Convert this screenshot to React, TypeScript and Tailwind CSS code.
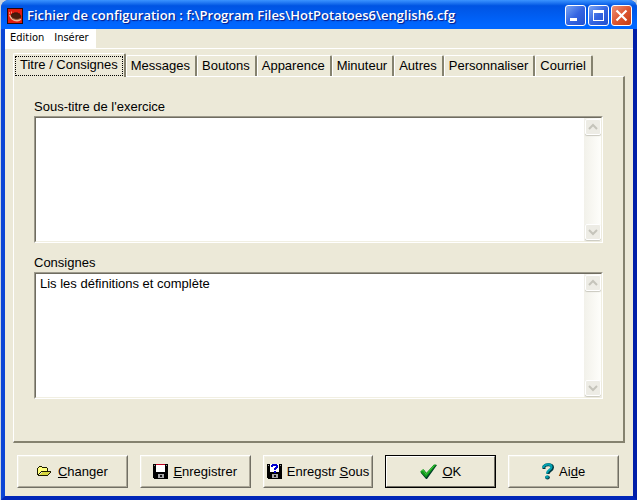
import { useState } from "react";
import type { ReactNode } from "react";
import clsx from "clsx";

const tabs = [
  "Titre / Consignes",
  "Messages",
  "Boutons",
  "Apparence",
  "Minuteur",
  "Autres",
  "Personnaliser",
  "Courriel",
];

function PotatoIcon() {
  return (
    <svg className="h-4 w-4 shrink-0" viewBox="0 0 16 16" aria-hidden="true">
      <rect width="16" height="16" fill="#2a0806" />
      <rect x="1" y="1" width="14" height="14" fill="#e01c10" />
      <path d="M2 6.500c.5 4 4 7 8 7 2.500 0 4-1 4.300-2.500L9 10.500z" fill="#f0b898" />
      <ellipse cx="9" cy="8" rx="5.300" ry="3.200" transform="rotate(8 9 8)" fill="#4a1c0c" />
      <path d="M5 10c2 1.500 6 2 8.500.5" fill="none" stroke="#8d5434" strokeWidth="1" />
      <path d="M6 6.500V5M8 6V4M10 6V4M12 6.500V5" stroke="#3a1408" strokeWidth="1" />
      <path d="M2.500 6V4M4.500 5.500V3.500" stroke="#f58a70" strokeWidth="1" />
    </svg>
  );
}

function FolderIcon() {
  return (
    <svg className="h-[11px] w-4" viewBox="0 0 16 11" shapeRendering="crispEdges" aria-hidden="true">
      <path d="M1 9V2h1V1h3v1h5v3H4L2 9z" fill="#ffff7b" />
      <path d="M5 6h9L11 9H3z" fill="#d8d840" />
      <path d="M0 2h1v7H0zM1 1h1v1H1zM2 0h3v1H2zM5 1h1v1H5zM6 1h4v1H6zM10 2h1v3h-1zM4 5h10v1H4zM3 6h1v1H3zM2 7h1v1H2zM1 8h1v1H1zM1 9h10v1H1zM13 6h1v1h-1zM12 7h1v1h-1zM11 8h1v1h-1z" fill="#1c1c00" />
    </svg>
  );
}

function DiskIcon({ query = false }: { query?: boolean }) {
  return (
    <svg className="h-[15px] w-[15px]" viewBox="0 0 15 15" shapeRendering="crispEdges" aria-hidden="true">
      <path d="M0 0h15v15H1v-1H0z" fill="#000" />
      <path d="M3 0h9v8H3z" fill="#fff" />
      {!query && <path d="M3 0h9v1H3z" fill="#c00020" />}
      <path d="M1 1h1v1H1zM13 1h1v1h-1z" fill="#999" />
      <path d="M5 10h6v4H5z" fill="#a8a8a8" />
      <path d="M7 11h2v2H7z" fill="#111" />
      {query && (
        <path d="M4 1h1V0h5v1h1v3h-1v1H9v1H7V4h1V3h1V2H6v1H4zM7 7h2v2H7z" fill="#0000d0" />
      )}
    </svg>
  );
}

function CheckIcon() {
  return (
    <svg className="h-[15px] w-[17px]" viewBox="0 0 17 15" aria-hidden="true">
      <path d="M.5 8.500L4 6l2.500 3L14 1h3L7 15H6z" fill="#003c28" />
      <path d="M.2 7.500L3.300 5l3 4L14 .5h2.500L6 13.500z" fill="#109a1c" />
      <path d="M1.500 7L3 6l3.200 4.500 8-9" fill="none" stroke="#3fc63e" strokeWidth="1" />
    </svg>
  );
}

function HelpIcon() {
  return (
    <svg className="h-[17px] w-3" viewBox="0 0 12 17" aria-hidden="true">
      <path d="M2 6V3.500C4 1 10.500 1 10.500 4.500c0 3-4.500 3-4.500 6.500" fill="none" stroke="#00343c" strokeWidth="3" />
      <path d="M1.500 5V3.500C3.500.5 9.500.5 9.500 4c0 3-4.500 3-4.500 6.500" fill="none" stroke="#00a0b0" strokeWidth="2.200" />
      <ellipse cx="5.500" cy="14.500" rx="2.300" ry="1.900" fill="#00343c" />
      <ellipse cx="5" cy="14" rx="1.800" ry="1.500" fill="#00a0b0" />
    </svg>
  );
}

function CaptionButton({ label, close, children }: { label: string; close?: boolean; children: ReactNode }) {
  return (
    <button
      type="button"
      aria-label={label}
      className={clsx(
        "h-[21px] w-[21px] rounded-[3px] border border-white bg-linear-to-br",
        close ? "from-[#ec9076] via-[#de5631] to-[#c43c12]" : "from-[#7ba4f2] via-[#3565e2] to-[#2350cf]"
      )}
    >
      <svg className="h-[19px] w-[19px]" viewBox="0 0 19 19" aria-hidden="true">
        {children}
      </svg>
    </button>
  );
}

function ScrollButton({ label, path }: { label: string; path: string }) {
  return (
    <button
      type="button"
      aria-label={label}
      className="h-4 w-4 rounded-[2px] border border-white bg-[#edece5] shadow-[0_1px_1px_#c9c8be]"
    >
      <svg className="h-[14px] w-[14px]" viewBox="0 0 14 14" aria-hidden="true">
        <path d={path} fill="none" stroke="#c5c4bb" strokeWidth="2" />
      </svg>
    </button>
  );
}

function MemoField({ id, label, initial = "" }: { id: string; label: string; initial?: string }) {
  const [value, setValue] = useState(initial);

  return (
    <div className="flex flex-1 flex-col gap-px">
      <label htmlFor={id} className="self-start leading-4">
        {label}
      </label>
      <div className="flex flex-1 border border-t-[#9d9a8c] border-r-white border-b-white border-l-[#9d9a8c]">
        <div className="flex flex-1 border border-t-[#6f6c60] border-r-[#f1efe2] border-b-[#f1efe2] border-l-[#6f6c60] bg-white">
          <textarea
            id={id}
            value={value}
            onChange={(e) => setValue(e.target.value)}
            className="min-w-0 flex-1 resize-none bg-white px-1 py-0.5 leading-4 outline-none"
          />
          <div className="flex w-[17px] flex-col items-center justify-between bg-linear-to-r from-[#f2f1ea] to-[#fefefb] py-px">
            <ScrollButton label={`${label} : haut`} path="M3 9l4-4 4 4" />
            <ScrollButton label={`${label} : bas`} path="M3 5l4 4 4-4" />
          </div>
        </div>
      </div>
    </div>
  );
}

function CommandButton({ icon, isDefault, children }: { icon: ReactNode; isDefault?: boolean; children: ReactNode }) {
  return (
    <button
      type="button"
      className={clsx(
        "flex h-[33px] min-w-0 items-center justify-center whitespace-nowrap border bg-[#ece9d8]",
        isDefault ? "border-black" : "border-t-white border-r-[#716f64] border-b-[#716f64] border-l-white"
      )}
    >
      <span
        className={clsx(
          "flex h-full w-full items-center justify-center gap-[5px] border",
          isDefault
            ? "border-t-white border-r-[#716f64] border-b-[#716f64] border-l-white"
            : "border-t-[#f1efe2] border-r-[#aca899] border-b-[#aca899] border-l-[#f1efe2]"
        )}
      >
        {icon}
        <span>{children}</span>
      </span>
    </button>
  );
}

export default function App() {
  const [active, setActive] = useState(tabs[0]);

  return (
    <div className="flex min-h-screen flex-col bg-[#c9d3df] pl-px font-['Liberation_Sans',Arial,sans-serif] text-[13px] text-black">
      <div className="flex flex-1 flex-col overflow-hidden rounded-t-lg bg-[#0b3fd0]">
        <header className="flex h-[29px] items-center gap-1 bg-linear-to-b from-[#3b94ff] from-0% via-[#0054e3] via-20% to-[#0066ff] to-85% pt-0.5 pr-[5px] pl-1.5">
          <PotatoIcon />
          <h1 className="flex-1 truncate font-['Open_Sans',sans-serif] text-[13px] font-semibold text-white [text-shadow:1px_1px_1px_#0a1883]">
            Fichier de configuration : f:\Program Files\HotPotatoes6\english6.cfg
          </h1>
          <div className="flex gap-0.5">
            <CaptionButton label="Réduire">
              <path d="M4 12h7v3H4z" fill="#fff" />
            </CaptionButton>
            <CaptionButton label="Agrandir">
              <path d="M4 4h11v11H4zM5 7v7h9V7z" fill="#fff" fillRule="evenodd" />
            </CaptionButton>
            <CaptionButton label="Fermer" close>
              <path d="M4.500 4.500l10 10M14.500 4.500l-10 10" stroke="#fff" strokeWidth="2.200" />
            </CaptionButton>
          </div>
        </header>

        <div className="flex flex-1 flex-col border-r-4 border-b-4 border-l-4 border-r-[#001ea8] border-b-[#0026b8] border-l-[#0b45d6] bg-[#ece9d8]">
          <nav className="flex h-5 border-b border-white font-['DejaVu_Sans_Condensed','DejaVu_Sans',sans-serif] text-[11px]">
            <div className="flex bg-white pr-0.5">
              <button type="button" className="px-[5px]">
                Edition
              </button>
              <button type="button" className="px-[5px]">
                Insérer
              </button>
            </div>
          </nav>

          <main className="flex flex-1 flex-col gap-3 px-2 pt-1 pb-2">
            <div className="flex flex-1 flex-col">
              <div role="tablist" className="flex items-end">
                {tabs.map((tab) => (
                  <button
                    key={tab}
                    type="button"
                    role="tab"
                    id={`tab-${tab}`}
                    aria-selected={tab === active}
                    onClick={() => setActive(tab)}
                    className={clsx(
                      "rounded-t-[2px] border-t border-r-2 border-l border-t-white border-r-[#85826f] border-l-white bg-[#ece9d8] whitespace-nowrap",
                      tab === active ? "relative -mb-px h-6 px-px pt-px" : "h-[21px] pr-[5px] pl-1"
                    )}
                  >
                    {tab === active ? (
                      <span className="flex h-5 items-start border border-dotted border-black px-1 leading-4">{tab}</span>
                    ) : (
                      tab
                    )}
                  </button>
                ))}
              </div>
              <section
                role="tabpanel"
                aria-labelledby={`tab-${active}`}
                className="flex flex-1 flex-col gap-3 border-t border-r-2 border-b-2 border-l border-t-white border-r-[#85826f] border-b-[#85826f] border-l-white px-5 pt-[22px] pb-[42px]"
              >
                <MemoField id="subtitle" label="Sous-titre de l'exercice" />
                <MemoField id="instructions" label="Consignes" initial="Lis les définitions et complète" />
              </section>
            </div>

            <div className="grid grid-cols-5 gap-3 pr-1.5 pl-1">
              <CommandButton icon={<FolderIcon />}>
                <u>C</u>hanger
              </CommandButton>
              <CommandButton icon={<DiskIcon />}>
                <u>E</u>nregistrer
              </CommandButton>
              <CommandButton icon={<DiskIcon query />}>
                Enregstr <u>S</u>ous
              </CommandButton>
              <CommandButton icon={<CheckIcon />} isDefault>
                <u>O</u>K
              </CommandButton>
              <CommandButton icon={<HelpIcon />}>
                Ai<u>d</u>e
              </CommandButton>
            </div>
          </main>
        </div>
      </div>
    </div>
  );
}
